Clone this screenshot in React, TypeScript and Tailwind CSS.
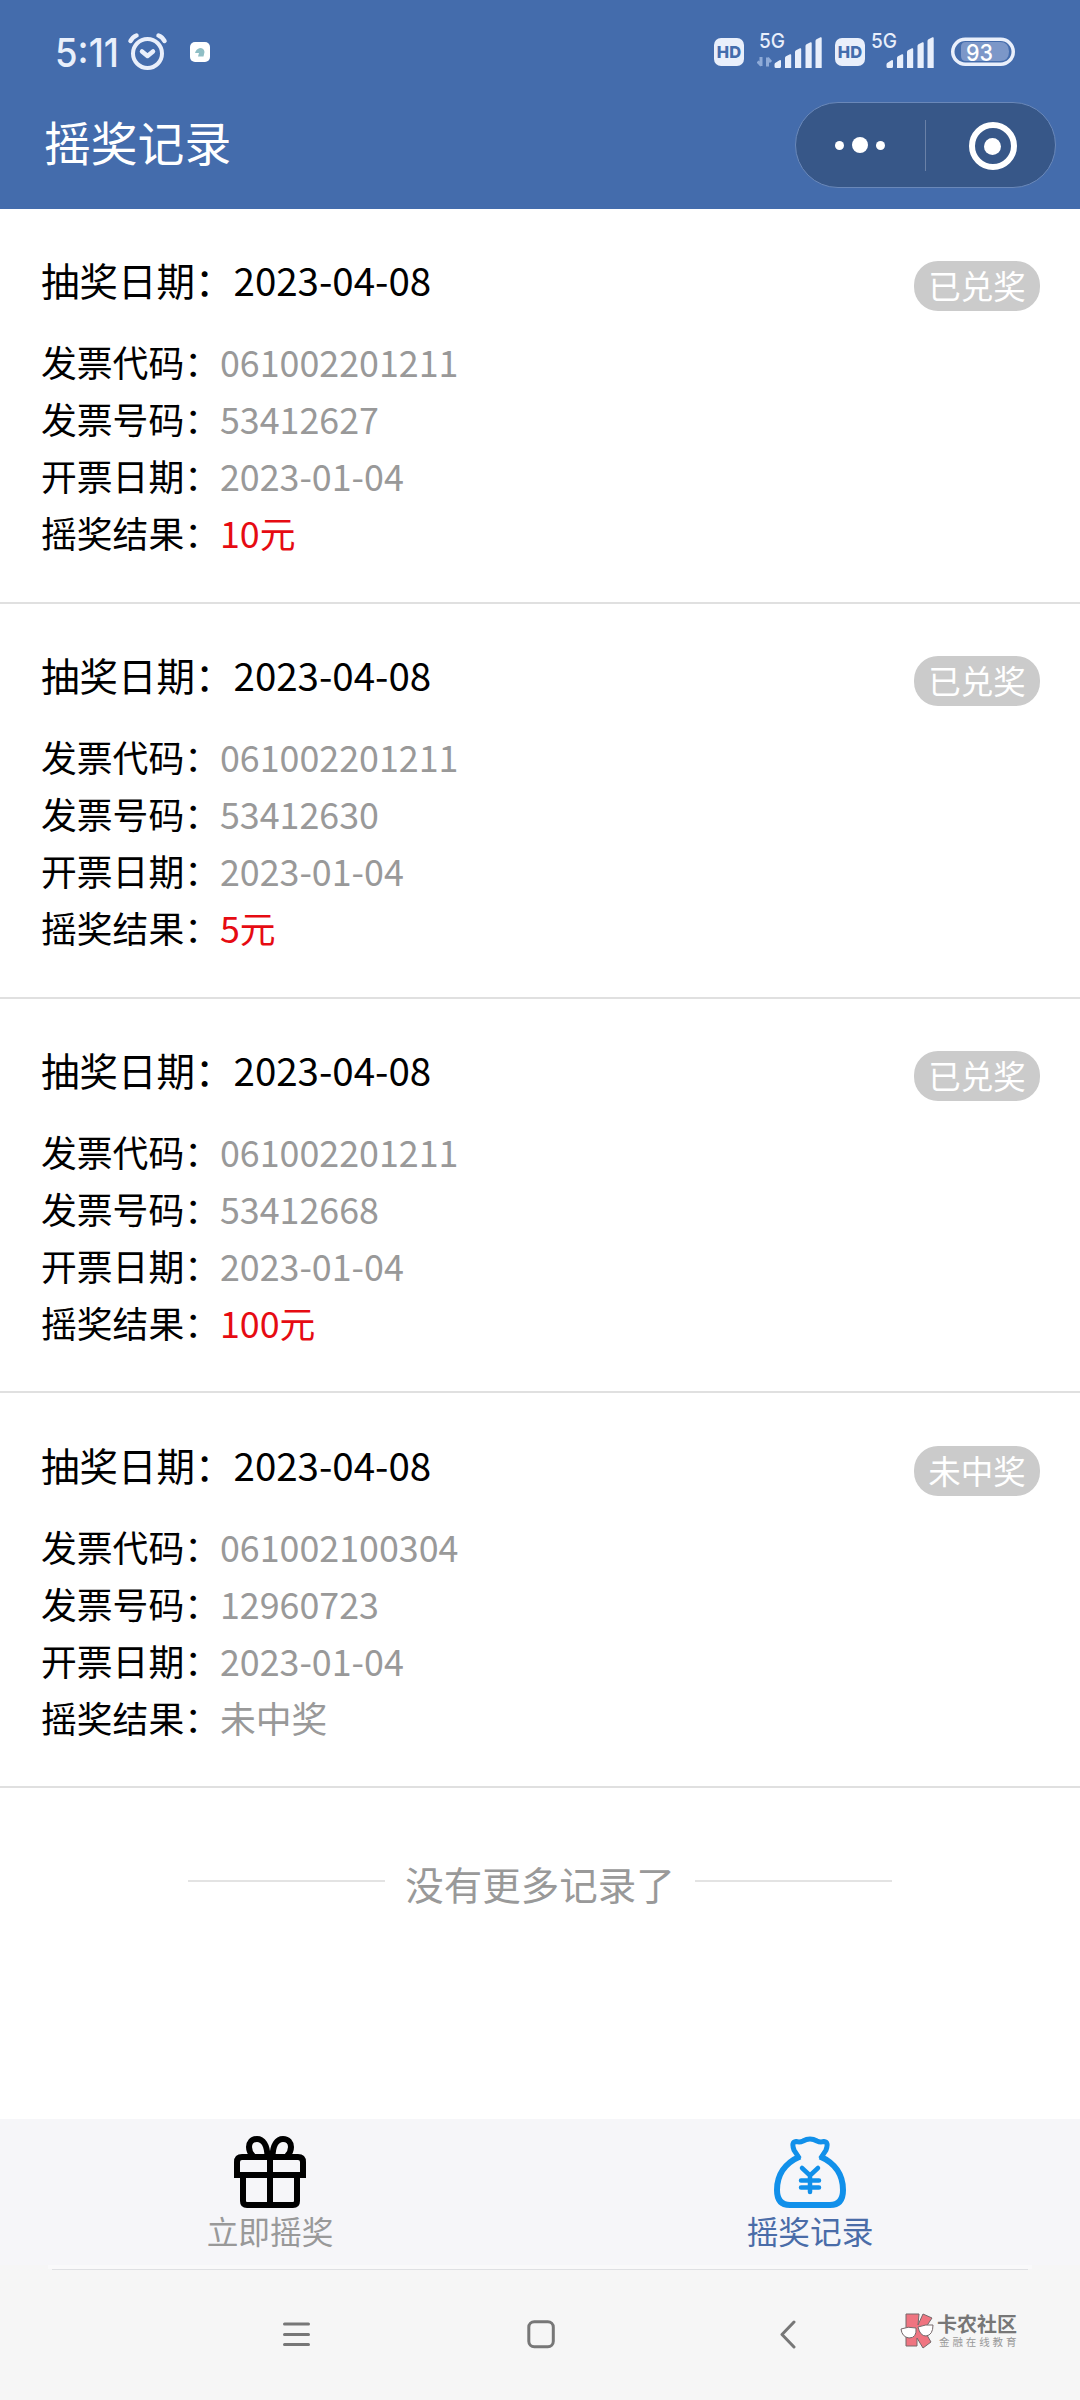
const records = [
  { drawDate: '2023-04-08', code: '061002201211', number: '53412627', issued: '2023-01-04', result: '10元', won: true, status: '已兑奖' },
  { drawDate: '2023-04-08', code: '061002201211', number: '53412630', issued: '2023-01-04', result: '5元', won: true, status: '已兑奖' },
  { drawDate: '2023-04-08', code: '061002201211', number: '53412668', issued: '2023-01-04', result: '100元', won: true, status: '已兑奖' },
  { drawDate: '2023-04-08', code: '061002100304', number: '12960723', issued: '2023-01-04', result: '未中奖', won: false, status: '未中奖' },
];

function HdBadge() {
  return (
    <span className="flex h-[28px] w-[30px] items-center justify-center rounded-[7px] bg-[#e9effb] font-['Inter'] text-[16.5px] font-extrabold leading-none text-[#446cac]">
      HD
    </span>
  );
}

function Signal({ arrows = false }: { arrows?: boolean }) {
  return (
    <svg width="67" height="42" viewBox="0 -4 67 42" fill="#e9effb">
      <text x="2" y="17.5" fontSize="20.5" fontWeight="500" fontFamily="Inter" textLength="26" lengthAdjust="spacingAndGlyphs">5G</text>
      {arrows && (
        <path d="M4 36v-9M0.5 31.5L4.5 35.5M10.5 36.5v-9M14 32l-3.5-4" stroke="#8fabd8" strokeWidth="3" fill="none" />
      )}
      <path d="M19 38q-1.5 0-1.5-1.5v-2q0-1 1-1.7l4-2.5q1.5-.8 1.5 1v5.2q0 1.5-1.5 1.5zM28 38V28q0-1 1-1.7l4-2q1.2-.5 1.2 1V38zM38 38V22q0-1 1-1.7l4-2q1.2-.5 1.2 1V38zM48.5 38V16q0-1 1-1.7l4-2q1.2-.5 1.2 1V38zM58.5 38V11q0-1 1-1.7l4-2q1.2-.5 1.2 1V38z" />
    </svg>
  );
}

function StatusBar() {
  return (
    <div className="flex h-[102px] items-start text-[#e9effb]">
      <svg className="ml-[50px] mt-[22px]" width="74" height="58" viewBox="-5 -10 74 58" fill="#e9effb">
        <text x="0" y="34.5" fontSize="39" fontWeight="500" fontFamily="Inter" textLength="64" lengthAdjust="spacingAndGlyphs">5:11</text>
      </svg>
      <svg className="ml-[3px] mt-[32px]" width="42" height="40" viewBox="0 0 42 40" fill="none" stroke="#e9effb" strokeWidth="4" strokeLinecap="round" strokeLinejoin="round">
        <circle cx="20.5" cy="21.5" r="14.5" />
        <path d="M15 19.5l5.5 4.5 5.5-4.5M3.5 9q2-4 6-5.5M37.5 9q-2-4-6-5.5" strokeWidth="4.5" />
      </svg>
      <div className="ml-[21px] mt-[42px] flex h-[20px] w-[20px] items-center justify-center rounded-[5px] bg-white">
        <svg width="10" height="9" viewBox="0 0 10 9" fill="#8fbec5">
          <path d="M0 5Q1 1 5 0q4 0 4.5 4l-1 4.5H3L4 5z" />
        </svg>
      </div>
      <div className="ml-auto mr-[65px] flex">
        <div className="mt-[38px]"><HdBadge /></div>
        <div className="ml-[13px] mt-[26px]"><Signal arrows /></div>
        <div className="ml-[11px] mt-[38px]"><HdBadge /></div>
        <div className="ml-[4px] mt-[26px]"><Signal /></div>
        <svg className="ml-[15px] mt-[37px]" width="64" height="29" viewBox="0 0 64 29">
          <rect x="1.75" y="2.25" width="60.5" height="25" rx="12.5" fill="none" stroke="#e9effb" strokeWidth="3.5" />
          <path d="M15 5h34q9 0 9 9.5T49 24H15q-5 0-5-5v-9q0-5 5-5z" fill="#7c97c8" />
          <text x="15" y="23.7" fontSize="23.5" fontWeight="500" fontFamily="Inter" fill="#fff" textLength="27" lengthAdjust="spacingAndGlyphs">93</text>
        </svg>
      </div>
    </div>
  );
}

function Capsule() {
  return (
    <div className="mr-[24px] flex h-[86px] w-[261px] items-center rounded-full border border-[#6a88b9] bg-[#375788]">
      <div className="flex w-[129px] items-center justify-center gap-[8px] pr-[2px]">
        <span className="h-[9px] w-[9px] rounded-full bg-white" />
        <span className="h-[16px] w-[16px] rounded-full bg-white" />
        <span className="h-[9px] w-[9px] rounded-full bg-white" />
      </div>
      <div className="h-[51px] w-px bg-[#6a81a7]" />
      <div className="flex flex-1 items-center justify-center pl-[4px] pt-[2px]">
        <div className="flex h-[48px] w-[48px] items-center justify-center rounded-full border-[6px] border-white">
          <span className="h-[17px] w-[17px] rounded-full bg-white" />
        </div>
      </div>
    </div>
  );
}

function Field({ label, value, tone }: { label: string; value: string; tone: string }) {
  return (
    <div className="flex h-[57px] items-center text-[35.8px] leading-none">
      <span className="text-black">{label}：</span>
      <span className={tone}>{value}</span>
    </div>
  );
}

function RecordItem({ record }: { record: (typeof records)[number] }) {
  return (
    <li className="h-[394.8px] border-b-2 border-[#e0e0e0] pl-[41px] pr-[40px] pt-[42.4px]">
      <div className="mb-[26.2px] flex h-[56px] items-start justify-between">
        <h2 className="text-[38.5px] leading-[56px] text-black">抽奖日期：{record.drawDate}</h2>
        <span className="mt-[10px] flex h-[50px] w-[126px] items-center justify-center rounded-[24px] bg-[#cbcbcb] pb-[2px] text-[32.5px] leading-none text-white">
          {record.status}
        </span>
      </div>
      <Field label="发票代码" value={record.code} tone="text-[#999999]" />
      <Field label="发票号码" value={record.number} tone="text-[#999999]" />
      <Field label="开票日期" value={record.issued} tone="text-[#999999]" />
      <Field label="摇奖结果" value={record.result} tone={record.won ? 'text-[#e60b12]' : 'text-[#999999]'} />
    </li>
  );
}

function GiftIcon() {
  return (
    <svg width="72" height="72" viewBox="0 0 72 72" fill="none" stroke="#000" strokeWidth="6">
      <path d="M3 39V26q0-5 5-5h56q5 0 5 5v13zM9 42v23q0 4 4 4h46q4 0 4-4V42M36 21v48" />
      <path d="M33.5 20C33 9 29 3 23 3 17.5 3 15 7 15 11q0 5 4 9M38.5 20C39 9 43 3 49 3c5.5 0 8 4 8 8q0 5-4 9" />
    </svg>
  );
}

function MoneyBagIcon() {
  return (
    <svg width="72" height="72" viewBox="0 0 72 72" fill="none" stroke="#1190ea" strokeWidth="6">
      <path d="M25.5 22.5L20 14q-3-8 2-8.5 4 1 7-.5 7-4 14 0 3 1.5 7 .5 5 .5 2 8.5l-5.5 8.5" strokeWidth="5" />
      <path d="M26 20.5C11 27 3 39 3 54q0 15 13 15h40q13 0 13-15C69 39 61 27 46 20.5" />
      <path d="M28 32l8 7.5 8-7.5M36 39v17M27 44.5h18M27 51.5h18" strokeWidth="4.5" strokeLinecap="round" strokeLinejoin="round" />
    </svg>
  );
}

function TabBar() {
  return (
    <nav className="flex h-[146px] bg-[#f6f6f9]">
      <div className="flex flex-1 flex-col items-center pt-[17px] text-[#999999]">
        <GiftIcon />
        <span className="mt-[4px] text-[31.7px] leading-[36px]">立即摇奖</span>
      </div>
      <div className="flex flex-1 flex-col items-center pt-[17px] text-[#4a6ca8]">
        <MoneyBagIcon />
        <span className="mt-[4px] text-[31.7px] leading-[36px]">摇奖记录</span>
      </div>
    </nav>
  );
}

function SiteMark() {
  return (
    <div className="flex items-start">
      <svg width="36" height="36" viewBox="0 0 36 36" stroke="#76696b" strokeWidth="1">
        <path d="M6 1h13l-1 11 5-11 9 4-8 12 7 12-8 6-6-10v8H6z" fill="#ef7480" />
        <path d="M1 16q7-3 15-1 1 10-7 10-7-1-8-9zM18 14q8-3 15-2 0 10-7 11-6 0-8-9z" fill="#fff" />
      </svg>
      <div className="ml-[1px] flex flex-col">
        <span className="h-[23px] text-[20px] font-bold leading-[22px] text-[#777]">卡农社区</span>
        <span className="ml-[2px] whitespace-nowrap text-[10.5px] leading-[12px] tracking-[2.9px] text-[#999]">金融在线教育</span>
      </div>
    </div>
  );
}

function SystemNav() {
  return (
    <div className="flex h-[135px] flex-col bg-[#f6f6f6]">
      <div className="mx-[48px] h-[4px] bg-[#f9f9fa]" />
      <div className="mx-[52px] h-px bg-[#dfe0e3]" />
      <div className="flex pt-[43px]">
        <svg className="ml-[282px] mt-[7px]" width="29" height="30" viewBox="0 0 29 30" stroke="#777" strokeWidth="3" strokeLinecap="round">
          <path d="M2.5 4h24M2.5 14.5h24M2.5 24.5h24" />
        </svg>
        <svg className="ml-[216px] mt-[7px]" width="29" height="30" viewBox="0 0 29 30" fill="none" stroke="#777" strokeWidth="3">
          <rect x="1.8" y="1.8" width="24.5" height="25" rx="5.5" />
        </svg>
        <svg className="ml-[223px] mt-[7px]" width="18" height="30" viewBox="0 0 18 30" fill="none" stroke="#777" strokeWidth="3" strokeLinecap="round" strokeLinejoin="round">
          <path d="M15 2L3 14.5 15 27" />
        </svg>
        <div className="ml-[103px]"><SiteMark /></div>
      </div>
    </div>
  );
}

export default function App() {
  return (
    <div className="flex h-[2400px] w-[1080px] flex-col overflow-hidden bg-white font-['Noto_Sans_CJK_SC',sans-serif]">
      <header className="h-[209px] shrink-0 bg-[#446cac]">
        <StatusBar />
        <div className="flex h-[86px] items-center justify-between">
          <h1 className="mb-[8px] ml-[44px] text-[46.8px] leading-none text-white">摇奖记录</h1>
          <Capsule />
        </div>
      </header>
      <main className="flex-1">
        <ul>
          {records.map((record) => (
            <RecordItem key={record.number} record={record} />
          ))}
        </ul>
        <div className="mt-[67px] flex items-center justify-center">
          <span className="h-[2px] w-[197px] bg-[#e3e3e3]" />
          <span className="-mb-[4px] ml-[20px] mr-[20px] w-[270px] whitespace-nowrap text-center text-[38.5px] leading-[56px] text-[#999999]">没有更多记录了</span>
          <span className="h-[2px] w-[197px] bg-[#e3e3e3]" />
        </div>
      </main>
      <TabBar />
      <SystemNav />
    </div>
  );
}
